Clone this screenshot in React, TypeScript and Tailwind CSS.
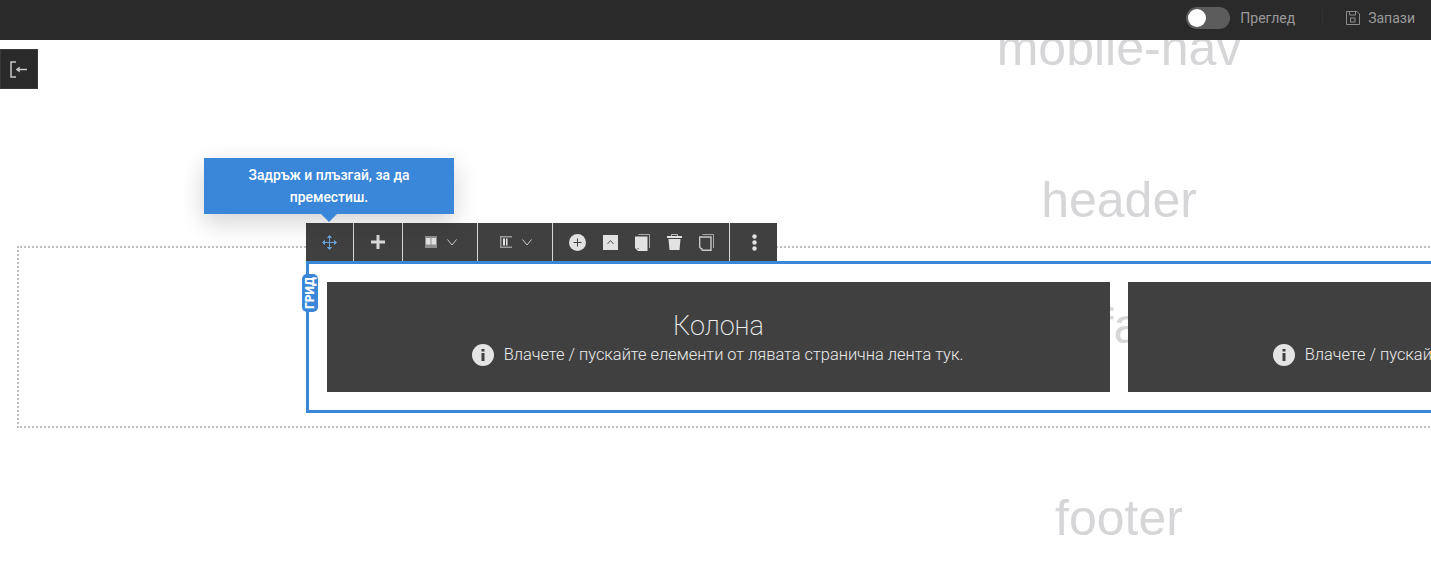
import React from 'react';

const Divider: React.FC = () => <div className="w-px h-full bg-[#d8d8d8]" />;

const MoveIcon = () => (
  <svg width="15" height="15" viewBox="0 0 15 15" fill="none" stroke="#6a9fd2" strokeWidth="1">
    <path d="M7.500.5v14M.5 7.500h14" />
    <path d="M5.500 2.500l2-2 2 2zM5.500 12.500l2 2 2-2zM2.500 5.500l-2 2 2 2zM12.500 5.500l2 2-2 2z" fill="#6a9fd2" />
  </svg>
);

const PlusIcon = () => (
  <svg width="14" height="14" viewBox="0 0 14 14" fill="#d8d8d8">
    <path d="M5.500 0h3v5.500H14v3H8.500V14h-3V8.500H0v-3h5.500z" />
  </svg>
);

const ColumnsIcon = () => (
  <svg width="12" height="12" viewBox="0 0 12 12">
    <rect width="12" height="12" fill="#8f8f8f" />
    <rect x="1" y="2" width="4.500" height="6.500" fill="#e2e2e2" />
    <rect x="6.500" y="2" width="4.500" height="6.500" fill="#e2e2e2" />
  </svg>
);

const AlignIcon = () => (
  <svg width="12" height="12" viewBox="0 0 12 12">
    <path d="M0 0h12v1.500H1.500v9H12V12H0z" fill="#9a9a9a" />
    <rect x="3" y="2.500" width="2" height="7" fill="#e2e2e2" />
    <rect x="6" y="2.500" width="1.500" height="7" fill="#e2e2e2" />
  </svg>
);

const Chevron = () => (
  <svg width="10" height="7" viewBox="0 0 10 7" fill="none" stroke="#c9c9c9" strokeWidth="1">
    <path d="m.5.500 4.500 5.500 4.500-5.500" />
  </svg>
);

const AddCircleIcon = () => (
  <svg width="17" height="17" viewBox="0 0 17 17">
    <circle cx="8.500" cy="8.500" r="8.500" fill="#e2e2e2" />
    <path d="M8.500 4.500v8M4.500 8.500h8" stroke="#404040" strokeWidth="1" />
  </svg>
);

const UpIcon = () => (
  <svg width="15" height="15" viewBox="0 0 15 15">
    <rect width="15" height="15" fill="#e2e2e2" />
    <path d="m4.500 9 3-3.500 3 3.500" fill="none" stroke="#555" strokeWidth="1" />
  </svg>
);

const CopyIcon = () => (
  <svg width="15" height="17" viewBox="0 0 15 17">
    <path d="M3.500.5h11v13.500" fill="none" stroke="#aaa" strokeWidth="1" />
    <path d="M0 2.500h12.500V17H3l-3-3z" fill="#e2e2e2" />
    <path d="M2 14h1.500v1.500z" fill="#404040" />
  </svg>
);

const TrashIcon = () => (
  <svg width="15" height="16" viewBox="0 0 15 16" fill="#e2e2e2">
    <path d="M4.500 2V.500h6V2" fill="none" stroke="#bbb" strokeWidth="1" />
    <rect y="2" width="15" height="2" />
    <path d="M1.500 5h12l-1 11h-10z" />
  </svg>
);

const PasteIcon = () => (
  <svg width="15" height="17" viewBox="0 0 15 17" fill="none" stroke="#c9c9c9">
    <path d="M3.500.5h11v13.500" stroke="#aaa" />
    <path d="M.7 3h11.300v13.300H3.500l-2.800-3z" fill="#404040" strokeWidth="1.400" />
    <path d="M2 14h1.500v1.500z" fill="#c9c9c9" stroke="none" />
  </svg>
);

const DotsIcon = () => (
  <svg width="5" height="17" viewBox="0 0 5 17" fill="#e2e2e2">
    <circle cx="2.500" cy="2.500" r="2.200" />
    <circle cx="2.500" cy="8.500" r="2.200" />
    <circle cx="2.500" cy="14.500" r="2.200" />
  </svg>
);

const InfoIcon = () => (
  <svg width="22" height="22" viewBox="0 0 22 22" className="shrink-0">
    <circle cx="11" cy="11" r="11" fill="#e4e4e4" />
    <rect x="9.500" y="5" width="3" height="2.500" fill="#404040" />
    <rect x="9.500" y="9" width="3" height="8" fill="#404040" />
  </svg>
);

const ExitIcon = () => (
  <svg width="18" height="17" viewBox="0 0 18 17" fill="none" stroke="#c8c8c8">
    <path d="M6 1H1v15h5" strokeWidth="1.500" />
    <path d="M17 8.500H7" strokeWidth="1.500" />
    <path d="M9.500 6 6 8.500 9.500 11z" fill="#c8c8c8" strokeWidth="0.500" />
  </svg>
);

const SaveIcon = () => (
  <svg width="14" height="14" viewBox="0 0 14 14" fill="none" stroke="#8e8e8e" strokeWidth="1">
    <path d="M.5.500h10.500l2.500 2.500v10.500H.5z" />
    <path d="M3.500.5v3.500h6V.5" />
    <rect x="4.500" y="7" width="4.500" height="4" />
  </svg>
);

const Column: React.FC<{ className: string }> = ({ className }) => (
  <div className={`flex flex-col items-center justify-center pt-[3px] h-[110px] bg-[#404040] ${className}`}>
    <div className="text-[27px] leading-[30px] font-extralight text-[#f0f0f0]">Колона</div>
    <div className="flex items-center gap-[10px] mt-[3px] -translate-x-px text-[16.4px] leading-[22px] font-light text-[#ececec] whitespace-nowrap">
      <InfoIcon />
      <span>Влачете / пускайте елементи от лявата странична лента тук.</span>
    </div>
  </div>
);

const Watermark: React.FC<{ label: string; className: string }> = ({ label, className }) => (
  <div className={`absolute left-[1119px] -translate-x-1/2 font-['Liberation_Sans',sans-serif] text-[50px] leading-none text-[#d6d6d8] whitespace-nowrap ${className}`}>
    {label}
  </div>
);

export default function App() {
  return (
    <div className="relative w-[1431px] h-[568px] overflow-hidden bg-white font-['Roboto',sans-serif]">
      <Watermark label="mobile-nav" className="top-[23px]" />
      <Watermark label="header" className="top-[175px]" />
      <Watermark label="default" className="top-[301px]" />
      <Watermark label="footer" className="top-[493px]" />

      <div className="relative flex items-center justify-end h-10 pb-[4px] bg-[#2a2a2a] text-[14px] text-[#9a9a9a]">
        <div className="w-[44px] h-[22px] rounded-full bg-[#5c5c5c] p-[2px]">
          <div className="w-[18px] h-[18px] rounded-full bg-white" />
        </div>
        <span className="ml-[10px]">Преглед</span>
        <div className="w-px h-4 ml-[27px] bg-[#333]" />
        <div className="ml-[23px]"><SaveIcon /></div>
        <span className="ml-[8px] mr-4">Запази</span>
      </div>

      <div className="relative flex items-center justify-center w-[38px] h-10 mt-[9px] bg-[#2a2a2a] border border-[#3a3a3a]">
        <ExitIcon />
      </div>

      <div className="relative mt-[157px] ml-[17px] w-[1500px] h-[182px] pt-[13px] pl-[287px] border-2 border-dotted border-[#bdbdbd]">
        <div className="relative flex gap-[18px] h-[152px] p-[18px] border-[3px] border-[#3a86d8]">
          <Column className="w-[783px] shrink-0" />
          <Column className="w-[783px] shrink-0" />

          <div className="absolute left-[-7px] top-[10px] flex items-center justify-center w-4 h-[38px] rounded-[5px] bg-[#3a86d8]">
            <span className="-rotate-90 text-[12px] font-black text-white leading-none">ГРИД</span>
          </div>
        </div>

        <div className="absolute left-[287px] top-[-25px] flex items-center h-[38px] bg-[#404040]">
          <div className="flex items-center justify-center w-[47px] h-full"><MoveIcon /></div>
          <Divider />
          <div className="flex items-center justify-center w-[48px] h-full"><PlusIcon /></div>
          <Divider />
          <div className="flex items-center justify-center gap-[10px] pl-[2px] w-[74px] h-full"><ColumnsIcon /><Chevron /></div>
          <Divider />
          <div className="flex items-center justify-center gap-[10px] pl-[2px] w-[74px] h-full"><AlignIcon /><Chevron /></div>
          <Divider />
          <div className="flex items-center justify-center gap-[17px] w-[176px] h-full">
            <AddCircleIcon />
            <UpIcon />
            <CopyIcon />
            <TrashIcon />
            <PasteIcon />
          </div>
          <Divider />
          <div className="flex items-center justify-center pl-[2px] w-[47px] h-full"><DotsIcon /></div>
        </div>

        <div className="absolute left-[185px] top-[-90px] w-[250px] h-[56px] flex items-center justify-center px-8 text-center text-[13.900px] leading-[22px] font-medium text-white bg-[#3a86d8] shadow-[0_8px_24px_rgba(0,0,0,0.18)]">
          Задръж и плъзгай, за да преместиш.
          <div className="absolute left-[117px] top-full w-0 h-0 border-x-[8px] border-x-transparent border-t-[8px] border-t-[#3a86d8]" />
        </div>
      </div>
    </div>
  );
}
